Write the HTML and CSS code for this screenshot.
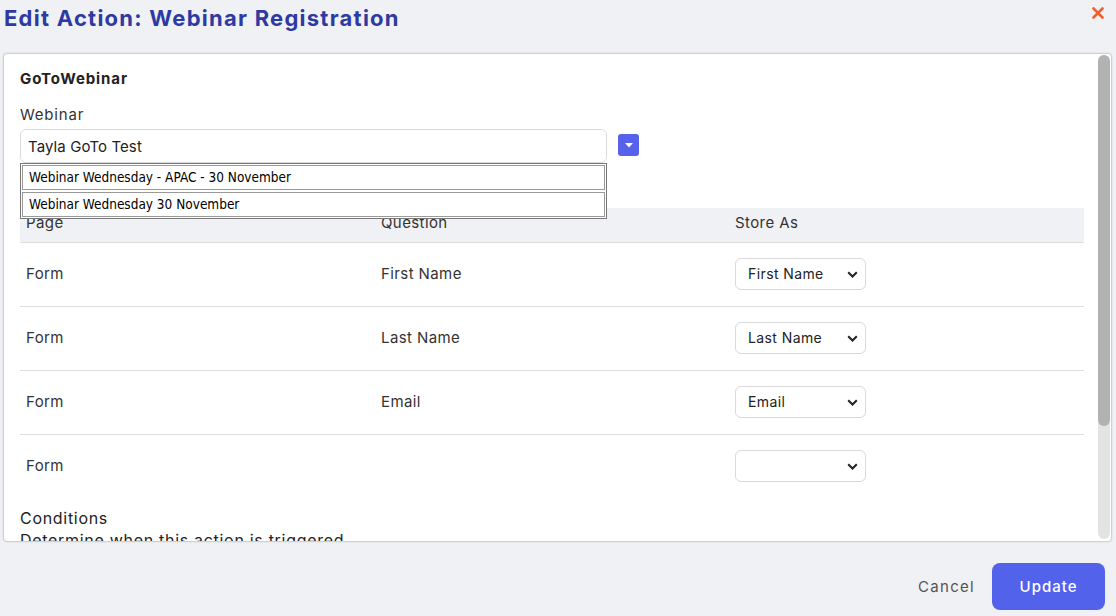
FILE: index.html
```html
<!DOCTYPE html>
<html>
<head>
<meta charset="utf-8">
<link rel="stylesheet" href="styles.css">
</head>
<body>
<div class="page">
  <header class="top">
    <h1 class="title">Edit Action: Webinar Registration</h1>
    <button class="close" aria-label="Close">
      <svg width="12" height="12" viewBox="0 0 12 12"><path d="M1.5 1.5L10.5 10.5M10.5 1.5L1.5 10.5" stroke="#f0602c" stroke-width="2.6" stroke-linecap="round"/></svg>
    </button>
  </header>
  <main class="panel">
    <div class="content">
      <div class="section-title">GoToWebinar</div>
      <div class="label">Webinar</div>
      <div class="webinar-row">
        <div class="combo">
          <div class="input">Tayla GoTo Test</div>
          <ul class="listbox">
            <li>Webinar Wednesday - APAC - 30 November</li>
            <li>Webinar Wednesday 30 November</li>
          </ul>
        </div>
        <button class="drop-btn" aria-label="Open">
          <svg width="8" height="5" viewBox="0 0 8 5"><path d="M0 0H8L4 4.5Z" fill="#fff"/></svg>
        </button>
      </div>

      <div class="table">
        <div class="tr th">
          <div class="td">Page</div>
          <div class="td">Question</div>
          <div class="td">Store As</div>
        </div>
        <div class="tr">
          <div class="td">Form</div>
          <div class="td">First Name</div>
          <div class="td"><div class="select"><span>First Name</span><svg width="11" height="7" viewBox="0 0 11 7"><path d="M1.2 1.2L5.5 5.5L9.8 1.2" fill="none" stroke="#222" stroke-width="2"/></svg></div></div>
        </div>
        <div class="tr">
          <div class="td">Form</div>
          <div class="td">Last Name</div>
          <div class="td"><div class="select"><span>Last Name</span><svg width="11" height="7" viewBox="0 0 11 7"><path d="M1.2 1.2L5.5 5.5L9.8 1.2" fill="none" stroke="#222" stroke-width="2"/></svg></div></div>
        </div>
        <div class="tr">
          <div class="td">Form</div>
          <div class="td">Email</div>
          <div class="td"><div class="select"><span>Email</span><svg width="11" height="7" viewBox="0 0 11 7"><path d="M1.2 1.2L5.5 5.5L9.8 1.2" fill="none" stroke="#222" stroke-width="2"/></svg></div></div>
        </div>
        <div class="tr last">
          <div class="td">Form</div>
          <div class="td"></div>
          <div class="td"><div class="select"><span></span><svg width="11" height="7" viewBox="0 0 11 7"><path d="M1.2 1.2L5.5 5.5L9.8 1.2" fill="none" stroke="#222" stroke-width="2"/></svg></div></div>
        </div>
      </div>

      <div class="cond-title">Conditions</div>
      <div class="cond-sub">Determine when this action is triggered</div>
    </div>
    <div class="scrollbar">
      <div class="track"><div class="thumb"></div></div>
    </div>
  </main>
  <footer class="bottom">
    <button class="cancel">Cancel</button>
    <button class="update">Update</button>
  </footer>
</div>
</body>
</html>
```

FILE: styles.css
```css
* { box-sizing: border-box; }
html, body { margin: 0; padding: 0; }
body {
  background: #f0f1f5;
  font-family: Inter, "Open Sans", sans-serif;
  color: #333;
  width: 1116px;
  height: 616px;
  overflow: hidden;
}
.page {
  display: flex;
  flex-direction: column;
  height: 616px;
}
.top {
  height: 53px;
  flex: none;
  display: flex;
  justify-content: space-between;
  align-items: flex-start;
}
.title {
  margin: 0;
  padding-left: 4px;
  font-size: 22px;
  line-height: 36px;
  font-weight: 700;
  color: #2e3aa2;
  letter-spacing: 1.25px;
}
.close {
  border: 0;
  background: none;
  padding: 0;
  margin: 7px 12px 0 0;
  width: 12px;
  height: 12px;
  display: block;
}
.close svg { display: block; }
.panel {
  flex: none;
  height: 489px;
  margin: 0 4px 0 3px;
  background: #fff;
  border: 1px solid #cfcfcf;
  border-radius: 4px;
  box-shadow: 0 0 2px rgba(0,0,0,0.12);
  display: flex;
  overflow: hidden;
}
.content {
  flex: 1;
  min-width: 0;
  overflow: hidden;
  padding: 15px 15px 0 16px;
}
.scrollbar {
  flex: none;
  width: 13px;
  padding: 1px 1px 2px 0;
}
.track {
  height: 100%;
  background: #e3e3e3;
  border-radius: 6px;
}
.thumb {
  height: 371px;
  background: #b2b2b2;
  border-radius: 6px;
}
.section-title {
  font-size: 15px;
  font-weight: 700;
  color: #222;
  line-height: 20px;
  letter-spacing: 0.9px;
}
.label {
  margin-top: 16px;
  font-size: 15px;
  line-height: 20px;
  color: #333;
  letter-spacing: 0.8px;
}
.webinar-row {
  margin-top: 4px;
  display: flex;
  align-items: flex-start;
}
.combo {
  position: relative;
  width: 587px;
}
.input {
  height: 34px;
  border: 1px solid #dadada;
  border-radius: 6px;
  padding: 1px 7px 0;
  font-size: 15px;
  line-height: 31px;
  color: #222;
  letter-spacing: 0.1px;
}
.listbox {
  position: absolute;
  left: 0;
  top: 34px;
  width: 587px;
  margin: 0;
  padding: 1px;
  list-style: none;
  background: #fff;
  border: 1px solid #777;
  z-index: 2;
}
.listbox li {
  height: 25px;
  margin: 0 0 2px;
  border: 1px solid #999;
  padding: 0 6px;
  font-family: "DejaVu Sans Condensed", "DejaVu Sans", sans-serif;
  font-size: 13.5px;
  line-height: 23px;
  color: #000;
}
.listbox li + li { margin-bottom: 0; }
.drop-btn {
  margin: 5px 0 0 11px;
  width: 21px;
  height: 22px;
  border: 0;
  border-radius: 3px;
  background: #5662e9;
  padding: 0;
  display: flex;
  align-items: center;
  justify-content: center;
}
.drop-btn svg { display: block; }
.table {
  margin-top: 45px;
  width: 1064px;
}
.tr {
  display: grid;
  grid-template-columns: 355px 354px 355px;
  height: 64px;
  padding-bottom: 2px;
  border-bottom: 1px solid #dedede;
  align-items: center;
}
.tr.last { border-bottom: 0; }
.tr.th {
  height: 35px;
  padding-bottom: 0;
  background: #f0f1f5;
  border-bottom: 1px solid #dedede;
  align-items: start;
}
.td {
  padding: 0 6px;
  font-size: 15px;
  letter-spacing: 0.4px;
  color: #333;
  line-height: 20px;
}
.th .td { line-height: 30px; }
.select {
  width: 131px;
  height: 32px;
  border: 1px solid #d9d9d9;
  border-radius: 6px;
  display: flex;
  align-items: center;
  justify-content: space-between;
  padding: 0 7px 0 12px;
  color: #222;
  font-size: 14px;
  letter-spacing: 0.4px;
}
.select svg { display: block; margin-top: 1px; }
.cond-title {
  margin-top: 8px;
  font-size: 16px;
  line-height: 22px;
  color: #222;
  letter-spacing: 0.7px;
}
.cond-sub {
  font-size: 16px;
  line-height: 22px;
  color: #222;
  letter-spacing: 0.7px;
}
.bottom {
  flex: 1;
  display: flex;
  justify-content: flex-end;
  align-items: flex-start;
  padding: 21px 11px 0 0;
}
.cancel {
  border: 0;
  background: none;
  font-family: Inter, sans-serif;
  font-size: 15px;
  color: #555;
  letter-spacing: 1.3px;
  height: 47px;
  padding: 0;
  margin-right: 17px;
}
.update {
  border: 0;
  width: 113px;
  height: 47px;
  border-radius: 8px;
  background: #5262eb;
  color: #fff;
  font-family: Inter, sans-serif;
  font-size: 15px;
  font-weight: 500;
  letter-spacing: 1px;
}
```
